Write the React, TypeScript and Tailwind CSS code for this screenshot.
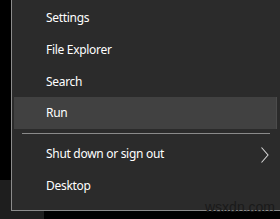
const topItems = ["Settings", "File Explorer", "Search", "Run"];

export default function App() {
  return (
    <div className="relative w-[280px] h-[219px] bg-black overflow-hidden flex flex-col font-['Noto_Sans',sans-serif] text-[12px] tracking-[-0.3px] text-white">
      <div className="flex h-[211px]">
        {/* strip of desktop to the left of the menu */}
        <div className="w-[11px] flex flex-col">
          <div className="h-[180px] bg-black" />
          <div className="flex-1 bg-[#1e1e1e]" />
        </div>

        <div className="flex-1 bg-[#2b2b2b] border-l border-b border-[#8c8c8c] pt-[2px] pb-[8px] flex flex-col">
          {topItems.map((item) => (
            <div
              key={item}
              className={
                item === "Run"
                  ? "h-[32px] ml-[2px] mr-[3px] pl-[32px] flex items-center bg-[#414141] border-r border-[#4c4c4c]"
                  : "h-[32px] ml-[2px] mr-[3px] pl-[32px] flex items-center"
              }
            >
              {item}
            </div>
          ))}

          <div className="h-px bg-[#8a8a8a] my-[4px] ml-[10px] mr-[10px]" />

          <div className="h-[32px] ml-[2px] mr-[3px] pl-[32px] pr-[8px] flex items-center justify-between">
            <span>Shut down or sign out</span>
            <svg width="8" height="16" viewBox="0 0 8 16" className="mt-[1px]">
              <polyline points="0.5,0.5 7,8 0.5,15.5" fill="none" stroke="#d4d4d4" strokeWidth="1.1" />
            </svg>
          </div>
          <div className="h-[32px] ml-[2px] mr-[3px] pl-[32px] flex items-center">Desktop</div>
        </div>
      </div>

      <div className="flex flex-1">
        <div className="w-[44px] bg-[#1e1e1e]" />
      </div>

      {/* watermark */}
      <div className="absolute left-[205px] top-[200px] text-[14px] leading-none tracking-normal text-[#1a1a1a] font-['Liberation_Sans',sans-serif]">
        wsxdn.com
      </div>
    </div>
  );
}
